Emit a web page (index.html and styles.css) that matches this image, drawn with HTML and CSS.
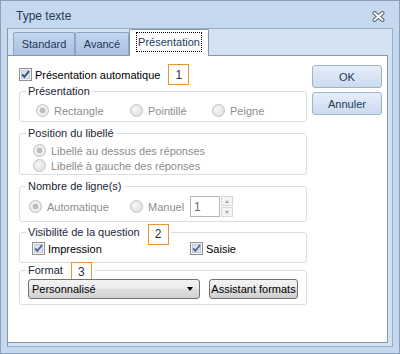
FILE: index.html
```html
<!DOCTYPE html>
<html lang="fr">

<head>
  <meta charset="UTF-8">
  <meta name="viewport" content="width=device-width, initial-scale=1.0">
  <title>Type texte</title>
  <link rel="stylesheet" href="styles.css">
</head>

<body>
  <div class="window">
    <div class="titlebar">
      <span class="title">Type texte</span>
      <svg class="close" width="13" height="11" viewBox="0 0 13 11">
        <path d="M2.5 2 L10.5 9 M10.5 2 L2.5 9" stroke="#56657a" stroke-width="4" stroke-linecap="round" fill="none" />
        <path d="M2.5 2 L10.5 9 M10.5 2 L2.5 9" stroke="#fff" stroke-width="2" stroke-linecap="round" fill="none" />
      </svg>
    </div>

    <div class="client">
      <div class="tabs">
        <div class="tab">Standard</div>
        <div class="tab">Avancé</div>
        <div class="tab active"><span class="focus">Présentation</span></div>
      </div>

      <div class="panel">
        <div class="main">
          <div class="top-row">
            <label class="check">
              <svg class="checkbox" width="13" height="13" viewBox="0 0 13 13">
                <rect x="0.5" y="0.5" width="12" height="12" fill="#f6f6f6" stroke="#8e8f8f" />
                <rect x="2.5" y="2.5" width="8" height="8" fill="#dde2ea" stroke="#c3c8d1" />
                <path d="M3.2 6.3 L5.3 8.8 L10 3.2" stroke="#2f4b84" stroke-width="1.8" fill="none" />
              </svg>
              Présentation automatique
            </label>
            <span class="marker">1</span>
          </div>

          <fieldset class="group g-presentation">
            <legend>Présentation</legend>
            <div class="options three">
              <label class="option"><span class="radio on"></span>Rectangle</label>
              <label class="option"><span class="radio"></span>Pointillé</label>
              <label class="option"><span class="radio"></span>Peigne</label>
            </div>
          </fieldset>

          <fieldset class="group g-position">
            <legend>Position du libellé</legend>
            <div class="options stack">
              <label class="option"><span class="radio on"></span>Libellé au dessus des réponses</label>
              <label class="option"><span class="radio"></span>Libellé à gauche des réponses</label>
            </div>
          </fieldset>

          <fieldset class="group g-lines">
            <legend>Nombre de ligne(s)</legend>
            <div class="options lines">
              <label class="option"><span class="radio on"></span>Automatique</label>
              <label class="option"><span class="radio"></span>Manuel</label>
              <span class="spin-value">1</span>
              <span class="spin-buttons">
                <span class="spin up"></span>
                <span class="spin down"></span>
              </span>
            </div>
          </fieldset>

          <fieldset class="group g-visibility">
            <legend><span>Visibilité de la question</span><span class="marker">2</span></legend>
            <div class="options visibility">
              <label class="check">
                <svg class="checkbox" width="13" height="13" viewBox="0 0 13 13">
                  <rect x="0.5" y="0.5" width="12" height="12" fill="#f6f6f6" stroke="#8e8f8f" />
                  <rect x="2.5" y="2.5" width="8" height="8" fill="#dde2ea" stroke="#c3c8d1" />
                  <path d="M3.2 6.3 L5.3 8.8 L10 3.2" stroke="#51689a" stroke-width="1.8" fill="none" />
                </svg>
                Impression
              </label>
              <label class="check">
                <svg class="checkbox" width="13" height="13" viewBox="0 0 13 13">
                  <rect x="0.5" y="0.5" width="12" height="12" fill="#f6f6f6" stroke="#8e8f8f" />
                  <rect x="2.5" y="2.5" width="8" height="8" fill="#dde2ea" stroke="#c3c8d1" />
                  <path d="M3.2 6.3 L5.3 8.8 L10 3.2" stroke="#51689a" stroke-width="1.8" fill="none" />
                </svg>
                Saisie
              </label>
            </div>
          </fieldset>

          <fieldset class="group g-format">
            <legend><span>Format</span><span class="marker">3</span></legend>
            <div class="options format">
              <div class="select">Personnalisé<span class="arrow"></span></div>
              <button type="button" class="btn-grey">Assistant formats</button>
            </div>
          </fieldset>
        </div>

        <div class="actions">
          <button type="button">OK</button>
          <button type="button">Annuler</button>
        </div>
      </div>
    </div>
  </div>
</body>

</html>
```

FILE: styles.css
```css
* {
  box-sizing: border-box;
  font-family: 'Liberation Sans', Arial, sans-serif;
}

body {
  margin: 0;
}

.window {
  width: 400px;
  height: 354px;
  border: 1px solid #8a9fba;
  background-color: #c5d8ee;
}

.titlebar {
  display: flex;
  align-items: center;
  justify-content: space-between;
  height: 27px;
  padding: 0 14px 0 15px;
}

.title {
  font-size: 12px;
  color: #1e395b;
  margin-top: 3px;
}

.close {
  margin-top: 4px;
}

.client {
  width: 386px;
  height: 319px;
  margin-left: 6px;
  border: 1px solid #98adc8;
  border-left-color: #8597ae;
  background-color: #d4e2f2;
}

/* tabs */
.tabs {
  display: flex;
  align-items: flex-end;
  height: 26px;
  padding-left: 5px;
}

.tab {
  display: flex;
  align-items: center;
  justify-content: center;
  height: 23px;
  border: 1px solid #8ea5c3;
  border-bottom: none;
  border-radius: 2px 2px 0 0;
  background: linear-gradient(#c3d5ec, #a9c1e1);
  font-size: 11px;
  color: #1e395b;
}

.tab:nth-child(1) {
  width: 62px;
}

.tab:nth-child(2) {
  width: 54px;
}

.tab.active {
  position: relative;
  z-index: 1;
  width: 80px;
  height: 27px;
  margin-bottom: -1px;
  padding-bottom: 2px;
  background: #fff;
  border-color: #8596ae;
}

.focus {
  padding: 3px 1px 3px 1px;
  border: 1px dotted #000;
}

/* panel */
.panel {
  display: flex;
  width: 381px;
  height: 288px;
  margin-left: -1px;
  padding: 8px 0 0 11px;
  border: 1px solid #8596ae;
  background-color: #fff;
  font-size: 11px;
}

.main {
  width: 288px;
}

.top-row {
  display: flex;
  align-items: center;
  height: 21px;
}

.check {
  display: flex;
  align-items: center;
  gap: 3px;
  color: #000;
}

.marker {
  display: flex;
  align-items: center;
  justify-content: center;
  width: 21px;
  height: 21px;
  margin-left: 8px;
  border: 1px solid #f0922e;
  background-color: #fff;
  color: #333;
  font-size: 12px;
}

/* group boxes */
.group {
  margin: 0;
  padding: 0 6px;
  border: 1px solid #d5dfe6;
  border-radius: 3px;
}

.group legend {
  display: flex;
  align-items: flex-start;
  padding: 0 2px;
  color: #1b2738;
  line-height: 13px;
}

.group legend .marker {
  margin-top: -2px;
  margin-bottom: -6px;
}

.g-presentation {
  padding-top: 6px;
  padding-bottom: 4px;
}

.g-position {
  margin-top: 5px;
  padding-top: 3px;
  padding-bottom: 1px;
}

.g-lines {
  margin-top: 5px;
  padding-top: 3px;
  padding-bottom: 4px;
}

.g-visibility {
  margin-top: 4px;
  padding-top: 3px;
  padding-bottom: 7px;
}

.g-format {
  margin-top: 1px;
  padding-top: 2px;
  padding-bottom: 5px;
}

.options {
  display: flex;
  align-items: center;
  color: #8d8d8d;
}

.option {
  display: flex;
  align-items: center;
  height: 13px;
}

.options.three {
  padding-left: 10px;
}

.options.three .option:nth-child(1) {
  width: 94px;
}

.options.three .option:nth-child(2) {
  width: 82px;
}

.options.stack {
  flex-direction: column;
  align-items: flex-start;
  padding-left: 7px;
}

.options.stack .option {
  height: 15px;
}

.options.lines {
  height: 21px;
  padding-left: 3px;
}

.options.lines .option:nth-child(1) {
  width: 101px;
}

.radio {
  width: 13px;
  height: 13px;
  margin-right: 5px;
  border: 1px solid #c2c2c2;
  border-radius: 50%;
  background: radial-gradient(circle at 40% 40%, #f7f7f7, #d9d9d9);
}

.radio.on {
  background: radial-gradient(circle, #bdbdbd 0 2.5px, #e2e2e2 3px, #f6f6f6 4px, #dadada 6px);
}

.spin-value {
  display: flex;
  align-items: center;
  width: 30px;
  height: 21px;
  margin-left: 6px;
  padding-left: 3px;
  border: 1px solid #b4b6ba;
  color: #6e6e6e;
  font-size: 12px;
}

.spin-buttons {
  display: flex;
  flex-direction: column;
  gap: 1px;
  margin-left: 1px;
}

.spin {
  position: relative;
  width: 12px;
  height: 10px;
  border: 1px solid #d7d7d7;
  background: #f4f4f4;
}

.spin::after {
  content: '';
  position: absolute;
  left: 3px;
  top: 3px;
  border-left: 2.5px solid transparent;
  border-right: 2.5px solid transparent;
}

.spin.up::after {
  border-bottom: 3px solid #a8a8a8;
}

.spin.down::after {
  border-top: 3px solid #a8a8a8;
}

.options.visibility {
  padding-left: 6px;
  height: 13px;
}

.options.visibility .check:first-child {
  width: 158px;
}

.options.format {
  padding-left: 2px;
  gap: 9px;
}

.select {
  display: flex;
  align-items: center;
  justify-content: space-between;
  width: 172px;
  height: 20px;
  padding: 0 4px 0 3px;
  border: 1px solid #707070;
  border-radius: 3px;
  background: linear-gradient(#f3f3f3 0%, #ebebeb 50%, #dddddd 51%, #d2d2d2 100%);
  color: #000;
}

.arrow {
  margin-right: 2px;
  border-left: 3.5px solid transparent;
  border-right: 3.5px solid transparent;
  border-top: 4px solid #000;
}

button {
  padding: 0;
  font-family: 'Liberation Sans', Arial, sans-serif;
  font-size: 11px;
  cursor: pointer;
}

.btn-grey {
  width: 89px;
  height: 20px;
  border: 1px solid #707070;
  border-radius: 3px;
  background: linear-gradient(#f3f3f3 0%, #ebebeb 50%, #dddddd 51%, #cfcfcf 100%);
  color: #000;
}

/* right buttons */
.actions {
  display: flex;
  flex-direction: column;
  gap: 4px;
  margin: 1px 0 0 5px;
}

.actions>button {
  width: 70px;
  height: 23px;
  border: 1px solid #a0b3cd;
  border-radius: 3px;
  background: linear-gradient(#e6eef9, #cbdbef);
  color: #1e395b;
}
```
